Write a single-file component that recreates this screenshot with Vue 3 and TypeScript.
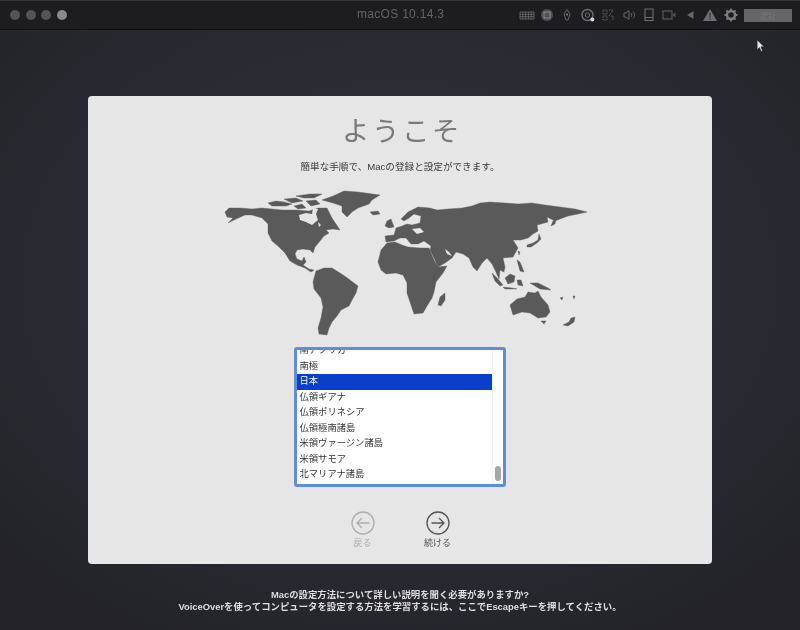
<script setup lang="ts">
const countries = [
  '南アフリカ',
  '南極',
  '日本',
  '仏領ギアナ',
  '仏領ポリネシア',
  '仏領極南諸島',
  '米領ヴァージン諸島',
  '米領サモア',
  '北マリアナ諸島',
]
const selected = '日本'

// 大陸の輪郭 (座標はページ基準、viewBox を合わせてある)
const land = [
  // 北米
  'M225 212 L229 208 L240 208 L252 209 L262 208 L272 209 L282 210 L296 210 L309 211 L318 208 L327 208 L332 218 L336 224 L340 230 L333 229 L326 230 L329 233 L324 236 L320 241 L315 247 L313 253 L310 250 L303 249 L297 250 L295 254 L297 259 L302 261 L304 257 L306 262 L303 265 L309 269 L314 270 L311 272 L305 268 L297 265 L290 261 L285 253 L279 247 L272 241 L268 233 L268 224 L262 218 L252 215 L245 215 L236 219 L228 223 L233 218 L227 217 Z',
  // 南米
  'M316 271 L324 268 L332 268 L340 273 L346 277 L358 286 L356 293 L352 300 L349 306 L341 310 L337 316 L332 322 L329 328 L327 335 L319 334 L318 328 L321 318 L323 307 L321 298 L314 289 L313 282 Z',
  // グリーンランド
  'M322 200 L333 196 L344 191 L358 192 L380 195 L372 200 L369 204 L358 208 L352 212 L347 217 L342 212 L342 206 L333 203 Z',
  // 北極圏の島
  'M268 203 L276 201 L284 202 L292 204 L286 206 L272 206 Z',
  'M284 199 L296 198 L303 201 L292 203 Z',
  'M296 196 L310 194 L322 194 L314 198 L304 198 Z',
  'M294 206 L302 204 L306 208 L298 209 Z',
  'M306 201 L316 200 L320 204 L311 206 Z',
  'M370 212 L378 211 L380 214 L373 215 Z',
  // イギリス
  'M385 226 L387 221 L391 219 L394 227 L389 228 Z',
  // ユーラシア
  'M385 236 L394 235 L396 228 L402 226 L407 224 L412 225 L420 223 L421 216 L414 214 L409 218 L404 221 L401 219 L408 212 L418 207 L430 208 L437 210 L448 209 L462 208 L472 206 L480 203 L490 202 L505 203 L518 204 L532 203 L545 205 L560 207 L575 209 L587 212 L578 214 L568 216 L560 219 L555 221 L551 219 L547 217 L548 222 L541 224 L537 225 L538 231 L533 234 L528 238 L521 240 L513 240 L518 248 L513 257 L503 258 L505 267 L504 272 L500 270 L499 279 L495 270 L492 264 L487 258 L482 263 L477 271 L473 267 L469 258 L463 254 L456 252 L452 258 L445 263 L438 267 L434 258 L430 250 L431 246 L424 241 L418 244 L411 244 L406 238 L400 238 L394 241 L386 242 Z',
  // アフリカ
  'M378 262 L381 250 L387 243 L395 242 L402 245 L408 247 L420 248 L429 248 L434 260 L438 267 L447 266 L443 273 L436 282 L434 292 L432 298 L427 306 L423 313 L414 314 L411 305 L407 293 L407 283 L403 275 L396 273 L386 274 L381 270 Z',
  // マダガスカル
  'M438 305 L440 297 L445 293 L445 300 L441 306 Z',
  // 日本・サハリン
  'M527 245 L533 243 L538 240 L539 234 L541 239 L537 243 L531 247 L527 247 Z',
  'M551 226 L553 221 L556 219 L555 224 Z',
  // 東南アジア
  'M518 251 L520 252 L519 255 Z',
  'M517 260 L520 262 L524 272 L520 271 Z',
  'M505 278 L510 274 L515 276 L514 282 L508 284 Z',
  'M492 273 L497 278 L503 285 L500 286 L495 281 Z',
  'M503 287 L512 288 L517 289 L505 289 Z',
  'M530 283 L538 283 L548 288 L551 290 L540 289 Z',
  'M517 280 L521 280 L523 286 L518 285 Z',
  // オーストラリア
  'M510 305 L517 299 L525 297 L528 292 L535 293 L538 291 L541 297 L548 305 L550 312 L546 317 L538 318 L530 313 L522 312 L513 315 Z',
  'M541 321 L546 321 L544 324 Z',
  // ニュージーランド
  'M563 325 L569 322 L571 318 L575 317 L574 322 L568 326 Z',
  // 太平洋の島
  'M560 298 L563 297 L562 300 Z',
  'M573 296 L575 296 L574 299 Z',
]

// 内海 (背景色で抜く)
const seas = [
  'M299 215 L306 213 L312 214 L313 208 L318 209 L316 214 L318 220 L312 225 L306 222 L300 220 Z',
  'M318 222 L321 225 L319 227 Z',
  'M445 249 L449 252 L452 256 L447 254 Z',
  'M412 229 L420 228 L424 232 L417 234 Z',
]
</script>

<template>
  <div class="screen">
    <header class="titlebar">
      <div class="lights">
        <span class="light" />
        <span class="light" />
        <span class="light" />
        <span class="light on" />
      </div>
      <div class="title">macOS 10.14.3</div>
      <div class="tools">
        <svg viewBox="0 0 16 16" class="tool"><path d="M1 5h14v7H1zM1 7.300h14M1 9.600h14M3.800 5v7M6.600 5v7M9.400 5v7M12.200 5v7" fill="none" stroke="#6e6e72" stroke-width=".8" /></svg>
        <svg viewBox="0 0 16 16" class="tool"><circle cx="8" cy="8" r="6" fill="#4f4f53" /><rect x="5" y="5" width="6" height="6" fill="none" stroke="#8a8a8e" /></svg>
        <svg viewBox="0 0 16 16" class="tool"><path d="M8 2.500 11 7 9 13H7L5 7Z" fill="none" stroke="#66666a" /><circle cx="8" cy="7.500" r="1" fill="#8a8a8e" /></svg>
        <svg viewBox="0 0 16 16" class="tool"><circle cx="7.500" cy="8" r="5.500" fill="none" stroke="#6e6e72" stroke-width="1.400" /><circle cx="7.500" cy="8" r="2.200" fill="none" stroke="#6e6e72" /><circle cx="12.300" cy="12.500" r="2" fill="#d8d8d8" /></svg>
        <svg viewBox="0 0 16 16" class="tool"><path d="M3 3h4v4H3zM3 9h4v4H3zM9 9l4-6M9 3h4M11 9h2v4" fill="none" stroke="#606064" stroke-dasharray="1.500 .8" /></svg>
        <svg viewBox="0 0 16 16" class="tool"><path d="M3 6h2l3-2.500v9L5 10H3zM10 6c1 1 1 3 0 4M12 4.500c2 2 2 5 0 7" fill="none" stroke="#66666a" /></svg>
        <svg viewBox="0 0 16 16" class="tool"><path d="M4 2h8v11.500H4zM4 10.500h8" fill="none" stroke="#6e6e72" stroke-width="1.100" /></svg>
        <svg viewBox="0 0 16 16" class="tool"><rect x="2" y="4" width="9" height="8" fill="none" stroke="#66666a" /><path d="m12 7 2.500-1.500v5L12 9Z" fill="#4d4d52" /></svg>
        <svg viewBox="0 0 16 16" class="tool"><path d="M11.500 4v8L5 8Z" fill="#66666a" /></svg>
        <svg viewBox="0 0 16 16" class="tool"><path d="M8 2 15 14H1Z" fill="#6e6e72" /><path d="M8 6v4.500M8 11.500v1.200" stroke="#26262a" /></svg>
        <svg viewBox="0 0 16 16" class="tool"><circle cx="8" cy="8" r="4" fill="none" stroke="#7d7d81" stroke-width="2.400" /><path d="M8 1.500v3M8 11.500v3M1.500 8h3M11.500 8h3M3.400 3.400l2.100 2.100M10.500 10.500l2.100 2.100M12.600 3.400l-2.100 2.100M5.500 10.500l-2.100 2.100" stroke="#7d7d81" stroke-width="1.800" /></svg>
        <div class="license">
          <span>認証</span>
        </div>
      </div>
    </header>

    <main class="stage">
      <svg class="pointer" viewBox="0 0 12 18" width="10" height="14">
        <path d="M1 1v13l3-3 2 5 2-1-2-5h4Z" fill="#e6e6e6" stroke="#222" stroke-width=".8" />
      </svg>

      <section class="card">
        <h1>ようこそ</h1>
        <p class="lead">簡単な手順で、Macの登録と設定ができます。</p>

        <svg class="map" viewBox="220 185 372 155" width="372" height="155">
          <path v-for="(d, i) in land" :key="i" :d="d" fill="#5a5a5a" stroke="#5a5a5a" stroke-width=".4" stroke-linejoin="round" />
          <path v-for="(d, i) in seas" :key="`sea-${i}`" :d="d" fill="#e6e6e6" />
        </svg>

        <div class="listbox">
          <div class="rows">
            <div
              v-for="name in countries"
              :key="name"
              class="row"
              :class="{ active: name === selected }"
            >
              {{ name }}
            </div>
          </div>
          <div class="track"><span class="thumb" /></div>
        </div>

        <div class="nav">
          <div class="nav-btn off">
            <svg viewBox="0 0 24 24" width="24" height="24">
              <circle cx="12" cy="12" r="11" fill="none" stroke="currentColor" stroke-width="1.300" />
              <path d="M18.500 12H6M11 7l-5 5 5 5" fill="none" stroke="currentColor" stroke-width="1.300" />
            </svg>
            <span>戻る</span>
          </div>
          <div class="nav-btn">
            <svg viewBox="0 0 24 24" width="24" height="24">
              <circle cx="12" cy="12" r="11" fill="none" stroke="currentColor" stroke-width="1.300" />
              <path d="M5.500 12H18M13 7l5 5-5 5" fill="none" stroke="currentColor" stroke-width="1.300" />
            </svg>
            <span>続ける</span>
          </div>
        </div>
      </section>

      <footer class="hint">
        <p>Macの設定方法について詳しい説明を聞く必要がありますか?</p>
        <p>VoiceOverを使ってコンピュータを設定する方法を学習するには、ここでEscapeキーを押してください。</p>
      </footer>
    </main>
  </div>
</template>

<style scoped>
.screen {
  width: 800px;
  height: 630px;
  display: flex;
  flex-direction: column;
  overflow: hidden;
  background: #212126;
  font-family: "Liberation Sans", "Noto Sans CJK JP", sans-serif;
}

.titlebar {
  height: 30px;
  flex: none;
  box-sizing: border-box;
  display: flex;
  align-items: center;
  position: relative;
  padding: 0 8px 0 10px;
  background: #1d1d20;
  border-top: 1px solid #38383b;
  border-bottom: 1px solid #111113;
}

.lights {
  display: flex;
  gap: 5.500px;
  filter: blur(0.5px);
}

.light {
  width: 10px;
  height: 10px;
  border-radius: 50%;
  background: #545457;
}

.light.on {
  background: #8a8a8c;
}

.title {
  position: absolute;
  left: 357px;
  top: 6px;
  font-size: 12px;
  letter-spacing: 0.3px;
  color: #636367;
  filter: blur(0.4px);
}

.tools {
  margin-left: auto;
  display: flex;
  align-items: center;
  gap: 4.400px;
  filter: blur(0.4px);
}

.tool {
  width: 16px;
  height: 16px;
  flex: none;
}

.license {
  width: 48px;
  height: 13px;
  margin-left: 1px;
  background: #656568;
  display: flex;
  align-items: center;
  justify-content: center;
  font-size: 8px;
  color: #77777a;
}

.stage {
  flex: 1;
  position: relative;
  display: flex;
  flex-direction: column;
  align-items: center;
  background:
    radial-gradient(ellipse 560px 420px at 50% 42%, #2f2f39 0%, #2b2b34 55%, #222228 100%);
}

.pointer {
  position: absolute;
  left: 756px;
  top: 9px;
}

.card {
  width: 624px;
  height: 468px;
  margin-top: 66px;
  flex: none;
  box-sizing: border-box;
  border-radius: 4px;
  background: #e6e6e6;
  display: flex;
  flex-direction: column;
  align-items: center;
}

h1 {
  margin: 16px 0 0 4px;
  font-size: 27.500px;
  line-height: 40px;
  font-weight: 400;
  letter-spacing: 2.500px;
  color: #7a7a7a;
  filter: blur(0.3px);
}

.lead {
  margin: 8px 0 0;
  font-size: 9.600px;
  line-height: 14px;
  color: #3a3a3a;
  filter: blur(0.3px);
}

.map {
  margin: 11px 0 0 11px;
  flex: none;
  display: block;
  filter: blur(0.4px);
}

.listbox {
  width: 212px;
  height: 140px;
  margin: 7px 0 0 -1px;
  flex: none;
  box-sizing: border-box;
  border: 3px solid #5d8edb;
  border-radius: 3px;
  background: #fff;
  display: flex;
  overflow: hidden;
}

.rows {
  flex: 1;
  margin-top: -7px;
}

.row {
  height: 15.500px;
  line-height: 15.500px;
  padding-left: 3px;
  font-size: 9.300px;
  color: #333;
  white-space: nowrap;
  filter: blur(0.25px);
}

.row.active {
  background: #0a3fcb;
  color: #fff;
}

.track {
  width: 11px;
  flex: none;
  display: flex;
  align-items: flex-end;
  justify-content: center;
  padding-bottom: 3px;
  box-sizing: border-box;
  background: #fcfcfc;
  border-left: 1px solid #f3f3f3;
}

.thumb {
  width: 6px;
  height: 15px;
  border-radius: 3px;
  background: #a6a6a6;
}

.nav {
  margin-top: 24px;
  display: flex;
  gap: 45px;
}

.nav-btn {
  width: 30px;
  display: flex;
  flex-direction: column;
  align-items: center;
  gap: 3px;
  color: #555;
  filter: blur(0.25px);
}

.nav-btn.off {
  color: #adadad;
}

.nav-btn span {
  font-size: 9px;
  line-height: 11px;
  white-space: nowrap;
}

.hint {
  margin-top: 25px;
  text-align: center;
  font-size: 9.400px;
  line-height: 12px;
  font-weight: 700;
  color: #dedede;
  filter: blur(0.3px);
}

.hint p {
  margin: 0;
}
</style>

<style>
html,
body {
  background: #212126;
}
</style>
